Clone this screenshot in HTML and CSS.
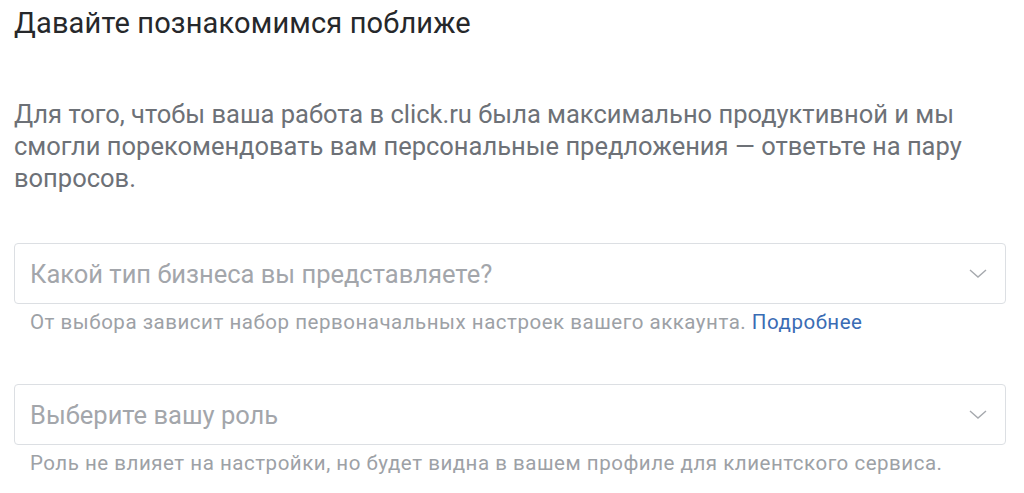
FILE: index.html
```html
<!DOCTYPE html>
<html lang="ru">
<head>
<meta charset="utf-8">
<link rel="stylesheet" href="styles.css">
</head>
<body>
<div class="page">
  <h1 class="title">Давайте познакомимся поближе</h1>
  <p class="intro">Для того, чтобы ваша работа в click.ru была максимально продуктивной и мы смогли порекомендовать вам персональные предложения — ответьте на пару вопросов.</p>
  <div class="field">
    <div class="select">
      <span class="placeholder">Какой тип бизнеса вы представляете?</span>
      <svg class="chev" width="18" height="9" viewBox="0 0 18 9"><path d="M1 1 L9 8 L17 1" fill="none" stroke="#a6a9ae" stroke-width="1.4"/></svg>
    </div>
    <div class="hint">От выбора зависит набор первоначальных настроек вашего аккаунта. <a class="link" href="#">Подробнее</a></div>
  </div>
  <div class="field">
    <div class="select">
      <span class="placeholder">Выберите вашу роль</span>
      <svg class="chev" width="18" height="9" viewBox="0 0 18 9"><path d="M1 1 L9 8 L17 1" fill="none" stroke="#a6a9ae" stroke-width="1.4"/></svg>
    </div>
    <div class="hint">Роль не влияет на настройки, но будет видна в вашем профиле для клиентского сервиса.</div>
  </div>
</div>
</body>
</html>
```

FILE: styles.css
```css
html, body {
  margin: 0;
  padding: 0;
  background: #fff;
}
body {
  font-family: Roboto, "Noto Sans", sans-serif;
}
.page {
  padding: 0 18px 0 14px;
}
.title {
  margin: 0;
  padding-top: 5px;
  font-size: 29px;
  letter-spacing: 0.15px;
  font-weight: 400;
  line-height: 36px;
  color: #26282b;
}
.intro {
  margin: 57px 0 0;
  font-size: 25.5px;
  line-height: 32px;
  color: #6d7177;
}
.field {
  margin-top: 49px;
}
.field + .field {
  margin-top: 50px;
}
.select {
  box-sizing: border-box;
  height: 61px;
  border: 1px solid #dcdfe3;
  border-radius: 4px;
  display: flex;
  align-items: center;
  justify-content: space-between;
  padding: 0 18px 0 15px;
}
.placeholder {
  font-size: 25.5px;
  color: #a3a6ab;
}
.chev {
  display: block;
}
.hint {
  margin-top: 6px;
  padding-left: 16px;
  font-size: 20.5px;
  letter-spacing: 0.52px;
  line-height: 24px;
  color: #9da1a6;
}
.link {
  color: #3a6cb4;
  text-decoration: none;
}
```
